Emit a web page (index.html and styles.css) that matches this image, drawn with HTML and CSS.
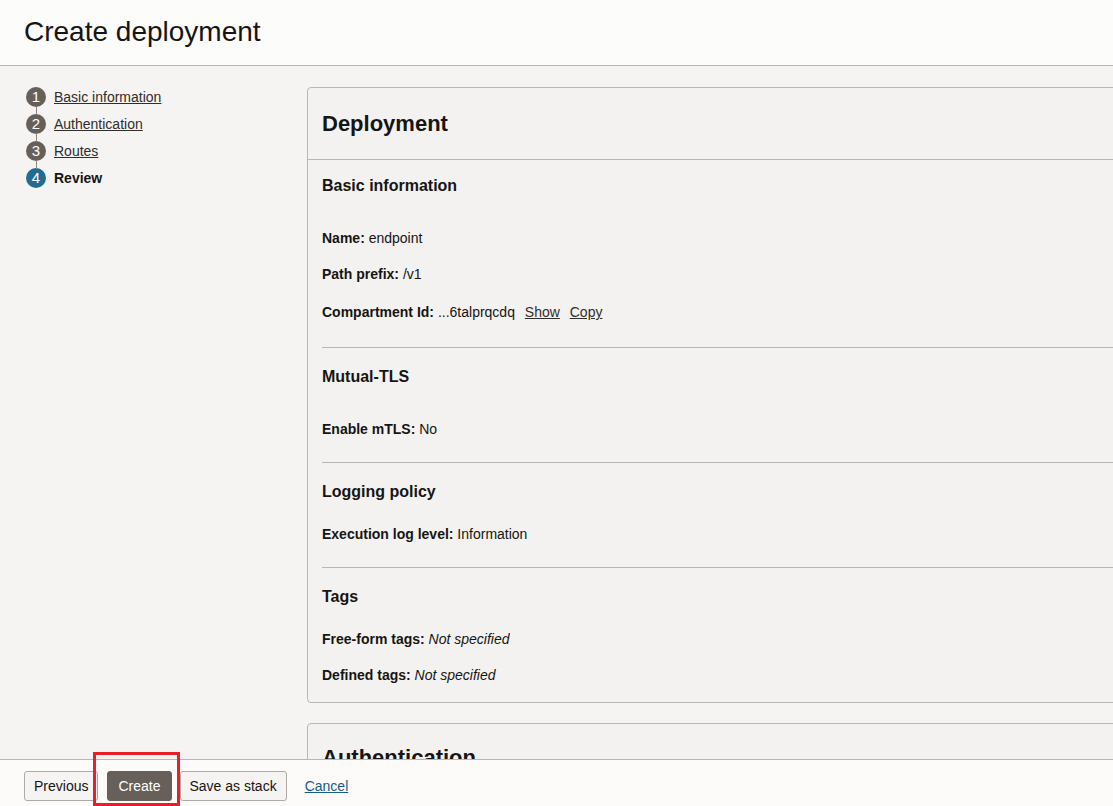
FILE: index.html
```html
<!DOCTYPE html>
<html lang="en">
<head>
<meta charset="utf-8">
<title>Create deployment</title>
<link rel="stylesheet" href="styles.css">
</head>
<body>
<header class="page-header">
  <h1 class="page-title">Create deployment</h1>
</header>
<div class="main">
  <nav class="steps">
    <div class="step"><span class="num">1</span><a class="step-link" href="#">Basic information</a></div>
    <div class="step"><span class="num">2</span><a class="step-link" href="#">Authentication</a></div>
    <div class="step"><span class="num">3</span><a class="step-link" href="#">Routes</a></div>
    <div class="step active"><span class="num">4</span><span class="step-current">Review</span></div>
  </nav>
  <div class="content">
    <section class="panel">
      <div class="panel-head"><h2 class="panel-title">Deployment</h2></div>
      <div class="sec sec-first">
        <h3 class="sec-title">Basic information</h3>
        <div class="kv kv-first-wide"><b>Name:</b> endpoint</div>
        <div class="kv"><b>Path prefix:</b> /v1</div>
        <div class="kv kv-comp"><b>Compartment Id:</b> ...6talprqcdq <a class="mini-link" href="#">Show</a> <a class="mini-link" href="#">Copy</a></div>
      </div>
      <div class="sec">
        <h3 class="sec-title">Mutual-TLS</h3>
        <div class="kv kv-first-wide"><b>Enable mTLS:</b> No</div>
      </div>
      <div class="sec">
        <h3 class="sec-title">Logging policy</h3>
        <div class="kv kv-first"><b>Execution log level:</b> Information</div>
      </div>
      <div class="sec sec-last">
        <h3 class="sec-title">Tags</h3>
        <div class="kv kv-first"><b>Free-form tags:</b> <i>Not specified</i></div>
        <div class="kv"><b>Defined tags:</b> <i>Not specified</i></div>
      </div>
    </section>
    <section class="panel panel-next">
      <h2 class="panel-title next-title">Authentication</h2>
    </section>
  </div>
</div>
<footer class="footer">
  <button class="btn">Previous</button>
  <button class="btn btn-primary">Create</button>
  <button class="btn">Save as stack</button>
  <a class="cancel" href="#">Cancel</a>
</footer>
<div class="highlight"></div>
</body>
</html>
```

FILE: styles.css
```css
* { box-sizing: border-box; }
html, body { margin: 0; padding: 0; }
body {
  font-family: "Liberation Sans", Arial, sans-serif;
  color: #161513;
  background: #f5f4f2;
  width: 1113px;
  height: 806px;
  overflow: hidden;
}
.page-header {
  height: 66px;
  background: #fcfcfb;
  border-bottom: 1px solid #b9b6b3;
  padding: 0 24px;
  display: flex;
  align-items: center;
}
.page-title {
  margin: 0;
  font-size: 28px;
  font-weight: normal;
  line-height: 32px;
  padding-bottom: 2px;
}
.main {
  display: flex;
  padding-top: 21px;
  overflow: hidden;
}
.steps {
  width: 307px;
  flex: none;
  padding-left: 26px;
  display: flex;
  flex-direction: column;
  gap: 7px;
}
.step {
  display: flex;
  align-items: center;
  gap: 8px;
  height: 20px;
  font-size: 14px;
  position: relative;
}
.step + .step::before {
  content: "";
  position: absolute;
  left: 9.5px;
  top: -8px;
  width: 1px;
  height: 9px;
  background: #8a8580;
}
.num {
  width: 20px;
  height: 20px;
  border-radius: 50%;
  background: #665f5a;
  color: #fff;
  font-size: 15px;
  line-height: 20px;
  text-align: center;
  flex: none;
}
.step.active .num { background: #236c91; }
.step-link { color: #312d2a; text-decoration: underline; }
.step-current { font-weight: bold; color: #161513; }
.content {
  flex: none;
  width: 900px;
}
.panel {
  background: #f3f2f0;
  border: 1px solid #b9b6b3;
  border-radius: 4px;
}
.panel-head {
  height: 72px;
  border-bottom: 1px solid #b9b6b3;
  padding-left: 14px;
  display: flex;
  align-items: center;
}
.panel-title {
  margin: 0;
  font-size: 22px;
  font-weight: bold;
  line-height: 26px;
}
.panel-next { margin-top: 20px; height: 120px; padding: 21px 0 0 14px; }
.sec {
  margin-left: 14px;
  padding: 19px 0 23px 0;
  border-top: 1px solid #b9b6b3;
}
.sec-first { border-top: none; padding-top: 16px; padding-bottom: 25px; }
.sec-last { padding-bottom: 17px; }
.sec-title {
  margin: 0;
  font-size: 16px;
  line-height: 20px;
  font-weight: bold;
}
.kv {
  font-size: 14px;
  line-height: 20px;
  margin-top: 16px;
}
.kv-first { margin-top: 22px; }
.kv-first-wide { margin-top: 32px; }
.kv-comp { margin-top: 18px; }
.mini-link { color: #312d2a; text-decoration: underline; margin-left: 6px; }
.footer {
  position: fixed;
  left: 0;
  bottom: 0;
  width: 1113px;
  height: 47px;
  background: #fcfbfa;
  border-top: 1px solid #b9b6b3;
  display: flex;
  align-items: center;
  padding: 5px 0 0 24px;
  gap: 8px;
}
.btn {
  font-family: "Liberation Sans", Arial, sans-serif;
  font-size: 14px;
  height: 30px;
  padding: 0 9px;
  background: #f5f4f2;
  color: #161513;
  border: 1px solid #aeaaa6;
  border-radius: 3px;
}
.btn-primary {
  background: #665f5a;
  color: #fff;
  border-color: #665f5a;
  margin-left: 1px;
  padding: 0 10px;
}
.cancel {
  margin-left: 10px;
  font-size: 14px;
  color: #1b5b88;
  text-decoration: underline;
}
.highlight {
  position: fixed;
  left: 93px;
  top: 752px;
  width: 87px;
  height: 54px;
  border: 3px solid #e5202b;
  pointer-events: none;
}
```
